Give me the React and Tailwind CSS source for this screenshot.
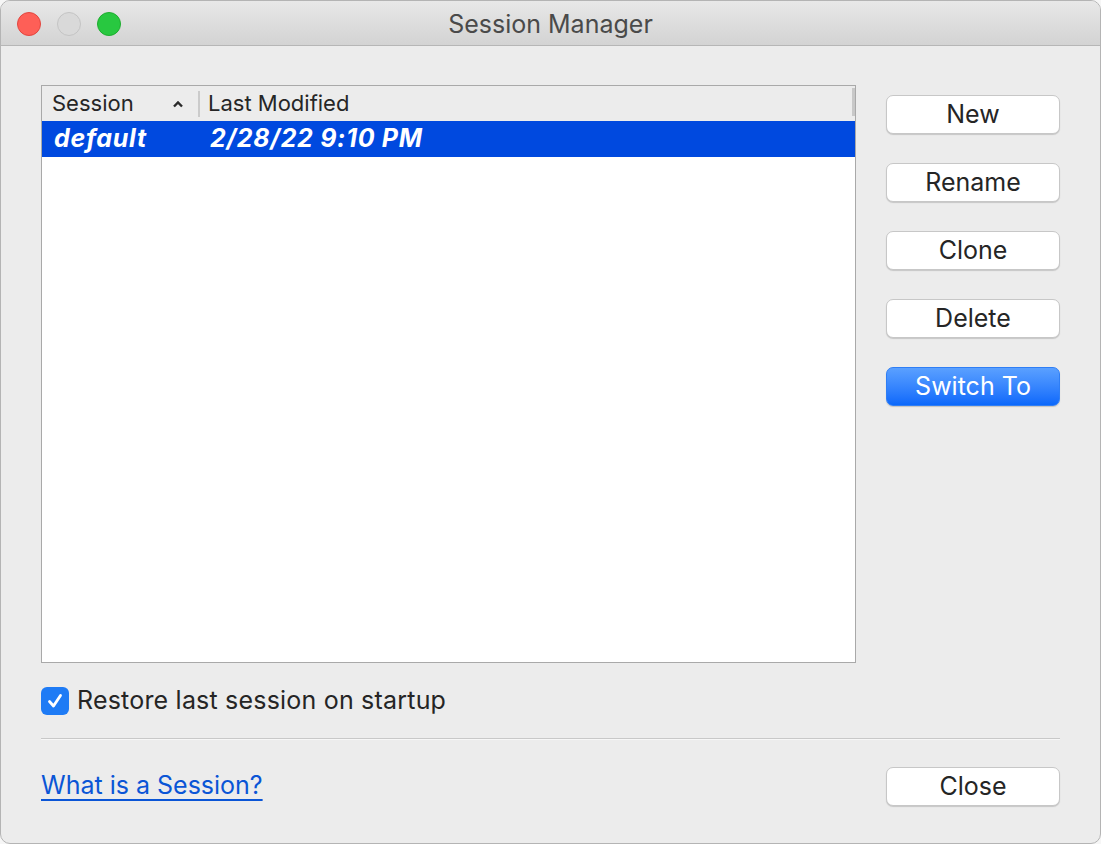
import React, { useState } from "react";

const font = { fontFamily: "Inter, 'Liberation Sans', sans-serif" };

const ActionButton = ({ label, primary }) => (
  <button
    className={
      primary
        ? "h-[39px] w-full rounded-[7px] border border-[#2f7ef5] bg-gradient-to-b from-[#5aa0ff] to-[#0a68fb] text-[25px] text-white shadow-[0_1px_1px_rgba(0,0,0,0.18)]"
        : "h-[39px] w-full rounded-[7px] border border-[#c7c7c7] bg-white text-[25px] text-[#252525] shadow-[0_1px_1px_rgba(0,0,0,0.16)]"
    }
  >
    {label}
  </button>
);

const App = () => {
  const [restore, setRestore] = useState(true);
  const sessions = [{ name: "default", modified: "2/28/22 9:10 PM" }];

  return (
    <div className="w-[1101px] h-[844px] bg-[#f6f6f6]" style={font}>
      <div className="h-full w-full rounded-[10px] border border-[#b4b4b4] bg-[#ececec] overflow-hidden flex flex-col">
        {/* title bar */}
        <div className="relative h-[45px] shrink-0 flex items-center justify-center pt-[3px] bg-gradient-to-b from-[#e8e8e8] to-[#d3d3d3] border-b border-[#b6b6b6]">
          <div className="absolute left-[16px] top-[11px] flex gap-[16px]">
            <span className="w-[24px] h-[24px] rounded-full bg-[#fe5f57] border border-[#e2463f]" />
            <span className="w-[24px] h-[24px] rounded-full bg-[#d9d9d9] border border-[#c4c4c4]" />
            <span className="w-[24px] h-[24px] rounded-full bg-[#28c840] border border-[#1ead2f]" />
          </div>
          <span className="text-[25px] text-[#4a4a4a]">Session Manager</span>
        </div>

        <div className="flex-1 px-[40px] pt-[39px]">
          <div className="flex gap-[30px]">
            {/* list */}
            <div className="w-[815px] h-[578px] shrink-0 border border-[#a9a9a9] bg-white flex flex-col">
              <div className="h-[35px] bg-[#ececec] flex items-center text-[22px] text-[#262626] relative">
                <div className="w-[156px] flex items-center justify-between pl-[10px] pr-[14px]">
                  <span>Session</span>
                  <svg width="12" height="8" viewBox="0 0 12 8" className="mt-[1px]">
                    <path d="M2 6.5 L6 2.5 L10 6.5" fill="none" stroke="#2a2a2a" strokeWidth="2.4" />
                  </svg>
                </div>
                <span className="w-[2px] h-[26px] bg-[#cbcbcb]" />
                <span className="pl-[8px]">Last Modified</span>
                <span className="absolute right-0 top-[2px] w-[3px] h-[28px] bg-[#c8c8c8]" />
              </div>
              {sessions.map((s) => (
                <div
                  key={s.name}
                  className="h-[36px] bg-[#0049df] flex items-center text-white font-bold italic text-[25px] tracking-[0.7px]"
                >
                  <span className="w-[168px] pl-[12px]">{s.name}</span>
                  <span>{s.modified}</span>
                </div>
              ))}
            </div>

            {/* buttons */}
            <div className="w-[174px] flex flex-col gap-[29px] pt-[10px]">
              <ActionButton label="New" />
              <ActionButton label="Rename" />
              <ActionButton label="Clone" />
              <ActionButton label="Delete" />
              <ActionButton label="Switch To" primary />
            </div>
          </div>

          {/* checkbox */}
          <label className="mt-[19px] flex items-center gap-[8px] cursor-pointer">
            <span
              onClick={() => setRestore(!restore)}
              className={
                restore
                  ? "w-[28px] h-[28px] rounded-[6px] bg-[#1e7bf5] flex items-center justify-center"
                  : "w-[28px] h-[28px] rounded-[6px] bg-white border border-[#b0b0b0]"
              }
            >
              {restore && (
                <svg width="18" height="18" viewBox="0 0 18 18">
                  <path d="M3.5 9.5 L7.5 14 L14.5 3.5" fill="none" stroke="white" strokeWidth="2.8" strokeLinecap="round" strokeLinejoin="round" />
                </svg>
              )}
            </span>
            <span className="text-[25px] text-[#252525] tracking-[0.2px]">Restore last session on startup</span>
          </label>

          <div className="mt-[18px] h-[2px] border-t border-[#c8c8c8] border-b border-b-[#f7f7f7]" />

          {/* footer */}
          <div className="mt-[27px] flex items-center justify-between">
            <a href="#" className="text-[25px] text-[#0a55d6] underline underline-offset-[5px] decoration-[2px]">
              What is a Session?
            </a>
            <div className="w-[174px]">
              <ActionButton label="Close" />
            </div>
          </div>
        </div>
      </div>
    </div>
  );
};

export default App;
